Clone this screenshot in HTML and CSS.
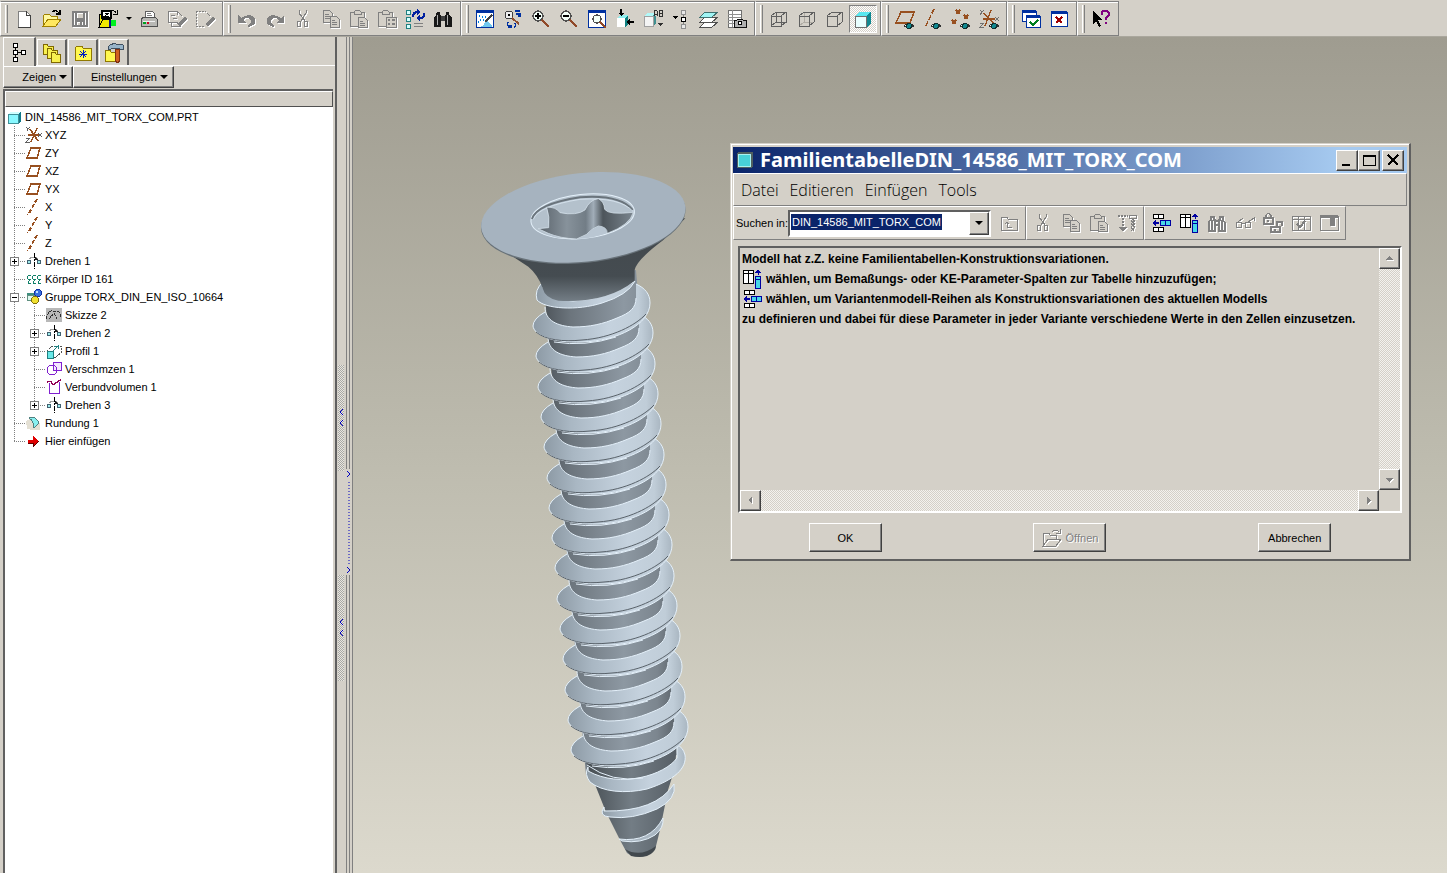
FILE: index.html
```
<!DOCTYPE html>
<html lang="de">
<head>
	<meta charset="utf-8">
	<title>DIN_14586_MIT_TORX_COM.PRT</title>
	<link rel="stylesheet" href="styles.css">
</head>
<body>
<!-- Shared icons -->
<svg class="defs" aria-hidden="true">
	<defs>
		<symbol id="new" viewBox="0 0 20 20"><path d="M4 2h8l4 4v12H4z" fill="#fff" stroke="#808080"/><path d="M12 2v4h4M16 6v12H4" fill="none" stroke="#404040"/></symbol>
		<symbol id="open" viewBox="0 0 20 20"><path d="M1 17V7l2-2h4l2 2h6v3" fill="#fff8a0" stroke="#a08000"/><path d="M1 17l5-7h13l-5 7z" fill="#ffe860" stroke="#a08000"/><path d="M10 3q4-3 7 1M18 1v4h-4" fill="none" stroke="#000" stroke-width="1.3"/></symbol>
		<symbol id="openoff" viewBox="0 0 20 20"><path d="M1 18V6l2-1h4l1 2h6v4M1 18l5-7h13l-5 7zM10 4q4-4 7 0M18 1v4h-4" fill="none" stroke="#808080"/></symbol>
		<symbol id="save" viewBox="0 0 20 20"><path d="M3 3h14v14H3zM6 3v7h8V3M6 17v-5h8v5M11 13v3" fill="none" stroke="#808080" stroke-width="1.3"/></symbol>
		<symbol id="zfolder" viewBox="0 0 20 20"><path d="M1 18V5h3v13z" fill="#f0e800" stroke="#000"/><path d="M1 18l4-8h7v8z" fill="#f0e800" stroke="#000"/><path d="M4 2h9v7H4z" fill="#fff" stroke="#000" stroke-width="1.4"/><path d="M7 4h4L7 7h4" fill="none" stroke="#000"/><path d="M11 11h2v7h-2z" fill="#101080"/><path d="M13 11h5v6h-5z" fill="#00f020"/><path d="M13 3q3-3 5 1M19 1v4h-4" fill="none" stroke="#000"/></symbol>
		<symbol id="print" viewBox="0 0 20 20"><path d="M6 9l1-7h6l2 2v5" fill="#fff" stroke="#606060"/><path d="M8 4h4M8 6h5" stroke="#808080"/><path d="M2 10l3-2h11l2 2v7H2z" fill="#b8b8b4" stroke="#505050"/><path d="M4 12h12" stroke="#f0f0f0"/><path d="M4 14h3" stroke="#00a020" stroke-width="2"/><path d="M8 14h2" stroke="#d00020" stroke-width="2"/></symbol>
		<symbol id="sheetpen" viewBox="0 0 20 20"><path d="M1 2h9l5 5M1 2v11h3M4 6h4M6 9h4M10 2v4M4 17h9l-3-4H4z" fill="none" stroke="#808080"/><path d="M18 7l2 3-7 8-3-3z" fill="#808080"/></symbol>
		<symbol id="dashpen" viewBox="0 0 20 20"><path d="M1 2h9l5 5M1 2v15h9" fill="none" stroke="#808080" stroke-dasharray="2 1"/><path d="M18 7l2 3-7 8-3-3z" fill="#808080"/></symbol>
		<symbol id="undo" viewBox="0 0 20 20"><path d="M1 6v8h8L6 11q5-4 8 0 1 3-3 5v2q9-2 7-8-4-7-14-1z" fill="#808080"/></symbol>
		<symbol id="redo" viewBox="0 0 20 20"><path d="M19 6v8h-8l3-3q-5-4-8 0-1 3 3 5v2q-9-2-7-8 4-7 14-1z" fill="#808080"/></symbol>
		<symbol id="cut" viewBox="0 0 20 20"><g fill="none" stroke="#808080"><path d="M6 1v3l6 8M13 1v3L8 12"/><ellipse cx="6" cy="15" rx="2" ry="3"/><ellipse cx="13" cy="15" rx="2" ry="3"/></g></symbol>
		<symbol id="copy" viewBox="0 0 20 20"><g fill="#d4d0c8" stroke="#808080"><path d="M2 1h6l3 3v9H2z"/><path d="M4 5h4M4 7h5M4 9h5"/><path d="M9 7h6l3 3v8H9z"/><path d="M11 11h3M11 13h5M11 15h5"/></g></symbol>
		<symbol id="paste" viewBox="0 0 20 20"><g fill="#d4d0c8" stroke="#808080"><path d="M1 3h14v14H1z"/><path d="M5 5V3l2-2h3l2 2v2z"/><path d="M9 8h6l3 3v7H9z"/><path d="M11 12h3M11 14h5M11 16h5"/></g></symbol>
		<symbol id="pastespecial" viewBox="0 0 20 20"><g fill="#d4d0c8" stroke="#808080"><path d="M1 3h14v14H1z"/><path d="M5 5V3l2-2h3l2 2v2z"/><path d="M9 8h10v10H9z"/><path d="M11 11h2M15 11h3M11 15h2M15 15h3" stroke-width="2"/></g></symbol>
		<symbol id="regen" viewBox="0 0 20 20"><path d="M1 1h4v4H1zM1 8h4v4H1zM1 15h4v4H1z" fill="#d8ffff" stroke="#208080"/><path d="M9 14h9M9 17h9" stroke="#808080"/><path d="M8 8q0-5 5-5M19 4q1 5-4 5" fill="none" stroke="#0020a0" stroke-width="2"/><path d="M12 0l4 3-4 3zM15 6v6l-4-3z" fill="#0020a0"/></symbol>
		<symbol id="binoc" viewBox="0 0 20 20"><path d="M4 3h3v3h1v12H1V9l2-3zM13 3h3v3l3 3v9h-7V6h1z" fill="#181818"/><path d="M8 7h4v5H8z" fill="#404040"/><path d="M4 6v10M14 6v10" stroke="#b0b0b0"/></symbol>
		<symbol id="binocoff" viewBox="0 0 20 20"><path d="M4 4h3v3h1v11H2V9l2-3zM13 4h3v3l2 3v8h-6V7h1zM8 8h4v4H8zM5 7v10M15 7v10" fill="none" stroke="#808080" stroke-width="1.5"/></symbol>
		<symbol id="repaint" viewBox="0 0 20 20"><path d="M1 1h17v17H1z" fill="#fff" stroke="#0030a0"/><path d="M1 1h17v3H1z" fill="#0030a0"/><path d="M5 18q5-2 6-7l6 5v2z" fill="#70c8f0"/><path d="M17 6l-7 7" stroke="#404040" stroke-width="1.5"/><path d="M4 7h1M7 8h1M5 11h1M8 11h1M3 13h1M10 8h1" stroke="#0080e0" stroke-width="2"/></symbol>
		<symbol id="spin" viewBox="0 0 20 20"><circle cx="6" cy="6" r="4" fill="#eee" stroke="#404040"/><path d="M5 6h2" stroke="#000" stroke-width="2"/><path d="M9 9l7 6" stroke="#905030" stroke-width="2"/><path d="M12 2h5M13 5h5M18 7h-3M5 13q-2 4 2 5M11 18q3-1 1-4" fill="none" stroke="#0030a0" stroke-width="1.5"/><path d="M5 16h4v3H5z" fill="#0030a0"/></symbol>
		<symbol id="zoomin" viewBox="0 0 20 20"><circle cx="7" cy="7" r="5" fill="#f4fff8" stroke="#505050" stroke-width="1.3"/><path d="M4 7h6M7 4v6" stroke="#000" stroke-width="1.6"/><path d="M11 11l7 7" stroke="#904828" stroke-width="2.5"/></symbol>
		<symbol id="zoomout" viewBox="0 0 20 20"><circle cx="7" cy="7" r="5" fill="#f4fff8" stroke="#505050" stroke-width="1.3"/><path d="M4 7h6" stroke="#000" stroke-width="1.6"/><path d="M11 11l7 7" stroke="#904828" stroke-width="2.5"/></symbol>
		<symbol id="refit" viewBox="0 0 20 20"><path d="M1 1h17v17H1z" fill="#fff" stroke="#0030a0"/><path d="M1 1h17v3H1z" fill="#0030a0"/><circle cx="10" cy="10" r="4" fill="#f4fff8" stroke="#505050" stroke-width="1.3"/><path d="M13 13l6 6" stroke="#904828" stroke-width="2"/></symbol>
		<symbol id="orient" viewBox="0 0 20 20"><path d="M2 9l3-3h8v9l-3 3H2z" fill="#108080"/><path d="M2 9h8v9H2z" fill="#fff"/><path d="M2 9l3-3h8l-3 3z" fill="#90f0f0"/><path d="M6 0v6M12 13h7" stroke="#000" stroke-width="1.4"/><path d="M3 4h6L6 7zM15 10v6l-4-3z" fill="#000"/></symbol>
		<symbol id="views" viewBox="0 0 20 20"><path d="M1 7l3-3h9v10l-3 3H1z" fill="#409090"/><path d="M1 7h9v10H1z" fill="#f4f4f4" stroke="#a0a0a0"/><path d="M1 7l3-3h8l-2 3z" fill="#b0f8f8"/><path d="M11 7V2l1-1 2 1v5M11 5h3M16 1h3v6h-3zM16 4h3" fill="#d4d0c8" stroke="#303030"/><path d="M15 14h5l-3 3z" fill="#303030"/></symbol>
		<symbol id="layerctl" viewBox="0 0 20 20"><path d="M12 2v16" stroke="#808080"/><path d="M10 1h4v4h-4zM10 15h4v4h-4z" fill="#e8e8e8" stroke="#909090"/><path d="M10 8h4v4h-4z" fill="#fff" stroke="#000"/><path d="M1 7h6L4 10z" fill="#000"/></symbol>
		<symbol id="layers" viewBox="0 0 20 20"><path d="M1 18l5-5h13l-6 5z" fill="#fff" stroke="#505050"/><path d="M1 13l5-5h13l-6 5z" fill="#fff" stroke="#505050"/><path d="M1 8l5-5h13l-6 5z" fill="#a0f4f4" stroke="#407070"/></symbol>
		<symbol id="viewmgr" viewBox="0 0 20 20"><path d="M1 1h13v17H1z" fill="#fff" stroke="#707070"/><path d="M1 5h13M1 8h13M1 11h13M1 14h8M5 1v17" stroke="#909090"/><path d="M7 11h3l1-1h4l1 1h3v7H7z" fill="#b0b0b0" stroke="#101010"/><circle cx="13" cy="14" r="2" fill="#fff" stroke="#000"/></symbol>
		<symbol id="wire" viewBox="0 0 20 20"><path d="M2 7h10v10H2zM7 3h10v10H7zM2 7l5-4M12 7l5-4M2 17l5-4M12 17l5-4" fill="none" stroke="#606060"/></symbol>
		<symbol id="hidden" viewBox="0 0 20 20"><path d="M7 3v10h10M2 17l5-4" fill="none" stroke="#b0aca4"/><path d="M2 7h10v10H2zM2 7l5-4h10v10l-5 4M12 7l5-4" fill="none" stroke="#606060"/></symbol>
		<symbol id="nohidden" viewBox="0 0 20 20"><path d="M2 7h10v10H2zM2 7l5-4h10v10l-5 4M12 7l5-4" fill="none" stroke="#606060"/></symbol>
		<symbol id="shade" viewBox="0 0 20 20"><path d="M2 7l4-4h12v11l-4 4H2z" fill="#108890"/><path d="M2 7h11v11H2z" fill="#e8ffff" stroke="#707070"/><path d="M2 7l4-4h12l-5 4z" fill="#58e8f0"/></symbol>
		<symbol id="eye" viewBox="0 0 20 20"><path d="M7 16q4-5 10 0-5 4-10 0z" fill="#fff" stroke="#303030"/><circle cx="12" cy="16" r="2.5" fill="#108890" stroke="#103030"/></symbol>
		<symbol id="dplane" viewBox="0 0 20 20"><path d="M1 14L6 3h13l-4 11z" fill="none" stroke="#985020" stroke-width="1.5"/><use href="#eye" width="20" height="20" x="2" y="1"/></symbol>
		<symbol id="daxis" viewBox="0 0 20 20"><path d="M11 0L2 19" stroke="#985020" stroke-width="1.5" stroke-dasharray="5 2"/><use href="#eye" width="20" height="20" x="1" y="1"/></symbol>
		<symbol id="dpoint" viewBox="0 0 20 20"><path d="M5 1l4 4M9 1L5 5M13 6l4 4M17 6l-4 4M1 11l4 4M5 11l-4 4" stroke="#985020" stroke-width="1.5"/><use href="#eye" width="20" height="20" x="2" y="1"/></symbol>
		<symbol id="dcsys" viewBox="0 0 20 20"><path d="M4 10h12M12 1L6 17M5 4l10 11" stroke="#985020" stroke-width="1.5"/><path d="M1 1l2 2 2-2M3 3L1 6M16 8l4 4M20 8l-4 4M1 14h4l-4 4h4" fill="none" stroke="#707070"/><use href="#eye" width="20" height="20" x="3" y="1"/></symbol>
		<symbol id="wincheck" viewBox="0 0 20 20"><path d="M1 2h14v10H1z" fill="#fff" stroke="#0030a0"/><path d="M1 1h14v3H1z" fill="#0030a0"/><path d="M5 7h14v11H5z" fill="#fff" stroke="#0030a0"/><path d="M5 6h14v3H5z" fill="#0030a0"/><path d="M9 13l3 3 5-5" fill="none" stroke="#008020" stroke-width="2"/></symbol>
		<symbol id="winclose" viewBox="0 0 20 20"><path d="M2 3h16v14H2z" fill="#fff" stroke="#0030a0"/><path d="M2 2h16v3H2z" fill="#0030a0"/><path d="M7 8l6 6M13 8l-6 6" stroke="#a00000" stroke-width="2"/></symbol>
		<symbol id="help" viewBox="0 0 20 20"><path d="M2 2v13l3-3 3 6 2-1-3-6h4z" fill="#000"/><path d="M11 6V4q0-2 3-2 4 0 4 3 0 2-3 4v2M15 13v2" fill="none" stroke="#800080" stroke-width="2.3"/></symbol>
		<symbol id="tree" viewBox="0 0 20 20"><path d="M6 5v10M8 10h4" stroke="#000"/><path d="M4 1h4v4H4zM4 8h4v4H4zM4 15h4v4H4zM12 8h4v4h-4z" fill="#fff" stroke="#000"/></symbol>
		<symbol id="folders" viewBox="0 0 20 20"><g fill="#f8f050" stroke="#806800"><path d="M1 3l1-2h3l1 2h5v8H1z"/><path d="M5 7l1-2h3l1 2h5v8H5z"/><path d="M9 11l1-2h3l1 2h4v8H9z"/></g></symbol>
		<symbol id="fav" viewBox="0 0 20 20"><path d="M2 17V5l2-2h5l1 2h8v12z" fill="#fff850" stroke="#907800"/><path d="M10 7v8M6 11h8M7 8l6 6M13 8l-6 6" stroke="#0020c0"/></symbol>
		<symbol id="hammer" viewBox="0 0 20 20"><path d="M1 18V9l1-2h4l1 2h6v9z" fill="#fff850" stroke="#907800"/><path d="M11 6h4l1 11-2 3-3-2z" fill="#d06020" stroke="#803010"/><path d="M4 4q3-4 8-3h4l3 1v4h-3l-1-1H9L5 7z" fill="#98b4c8" stroke="#405060"/></symbol>
		<symbol id="part" viewBox="0 0 18 18"><path d="M3 6l3-2h10v9l-2 2H3z" fill="#107888"/><path d="M3 6h10v9H3z" fill="#88f8ff" stroke="#409098"/><path d="M3 6l3-2h10l-3 2z" fill="#d0ffff"/></symbol>
		<symbol id="csys" viewBox="0 0 18 18"><path d="M3 9h12M12 2L6 16M5 3l8 12" stroke="#985020" stroke-width="1.5"/><path d="M1 1l2 2 2-2M3 3L2 5M13 7l4 4M17 7l-4 4M1 12h4l-4 4h4" fill="none" stroke="#606060"/></symbol>
		<symbol id="plane" viewBox="0 0 18 18"><path d="M2 14L6 4h9l-3 10z" fill="none" stroke="#985020" stroke-width="1.5"/></symbol>
		<symbol id="axis" viewBox="0 0 18 18"><path d="M12 1L3 17" stroke="#985020" stroke-width="2" stroke-dasharray="4 2"/></symbol>
		<symbol id="revolve" viewBox="0 0 18 18"><path d="M4 7q4-4 9 0" fill="none" stroke="#a0a0a0"/><circle cx="4" cy="10" r="2" fill="#a0ecec" stroke="#406070"/><circle cx="14" cy="10" r="2" fill="#a0ecec" stroke="#406070"/><path d="M9 1v16" stroke="#000" stroke-dasharray="5 1 2 1"/><path d="M10 5l3 3h-3z" fill="#202020"/></symbol>
		<symbol id="body" viewBox="0 0 18 18"><g fill="none" stroke="#108068"><path d="M6 6q-5-1-3 3 3 0 2 1-4 4 1 3"/><path d="M11 6q-5-1-3 3 3 0 2 1-4 4 1 3"/><path d="M16 6q-5-1-3 3 3 0 2 1-4 4 1 3"/></g></symbol>
		<symbol id="group" viewBox="0 0 18 18"><path d="M2 5h9v7H2z" fill="#409080"/><path d="M2 7h7v5H2z" fill="#e0f8f0" stroke="#609080"/><circle cx="13" cy="5" r="3.5" fill="#3870e0" stroke="#1030a0"/><circle cx="10" cy="12" r="3.5" fill="#f0e030" stroke="#807010"/><circle cx="12" cy="4" r="1" fill="#c0e0ff"/></symbol>
		<symbol id="sketch" viewBox="0 0 18 18"><path d="M1 2h16v14H1z" fill="#b8b8b8"/><path d="M1 13q3-9 6-8t5 0q3 0 4 7M4 13l5-6 3 6" fill="none" stroke="#303030" stroke-dasharray="3 1"/></symbol>
		<symbol id="extrude" viewBox="0 0 18 18"><path d="M2 9l5-5h9v7l-7 5" fill="none" stroke="#505050" stroke-dasharray="2 1"/><path d="M2 9h6v7H2z" fill="#68e8e8" stroke="#208080"/><path d="M8 9l5-5M13 3v4M9 4h4" stroke="#208080"/></symbol>
		<symbol id="merge" viewBox="0 0 18 18"><path d="M8 2h8v8H8z" fill="#f4e8ff" stroke="#8020d0"/><circle cx="7" cy="10" r="5" fill="none" stroke="#8020d0"/></symbol>
		<symbol id="volume" viewBox="0 0 18 18"><path d="M4 5v10h10V4" fill="none" stroke="#8020d0"/><path d="M2 4q4-2 5 1t4 0 5-3" fill="none" stroke="#900050" stroke-width="1.4"/></symbol>
		<symbol id="round" viewBox="0 0 18 18"><path d="M1 7l6-3 8 5v7H8L2 15z" fill="#e4e0d4"/><path d="M4 4q6-3 10 5l-5 5q0-7-5-10z" fill="#88f0f0" stroke="#508080"/></symbol>
		<symbol id="insert" viewBox="0 0 18 18"><path d="M3 8h5V4l6 5-6 6v-4H3z" fill="#e00000"/><path d="M3 11h5v4l6-6" fill="none" stroke="#600000"/></symbol>
		<symbol id="addrow" viewBox="0 0 20 20"><path d="M2 1h5v4H2zM7 1h5v4H7zM2 14h5v4H2zM7 14h5v4H7z" fill="#fff" stroke="#000"/><path d="M9 7h5v5H9zM14 7h5v5h-5z" fill="#48d8e8" stroke="#0000a0"/><path d="M3 10h5" stroke="#0000a0" stroke-width="2"/><path d="M5 6v7L1 10z" fill="#0000a0"/></symbol>
		<symbol id="addcol" viewBox="0 0 20 20"><path d="M1 1h5v13H1zM6 1h5v13H6zM1 4h10" fill="#fff" stroke="#000"/><path d="M13 7h5v12h-5zM13 10h5" fill="#48d8e8" stroke="#0000a0"/><path d="M16 1v5" stroke="#0000a0"/><path d="M12 4h7l-3-4z" fill="#0000a0"/></symbol>
		<symbol id="upfolder" viewBox="0 0 20 20"><path d="M2 17V5l1-1h5l1 2h9v11zM8 14h5M8 14V9M6 11l2-2 2 2" fill="none" stroke="#808080"/></symbol>
		<symbol id="sort" viewBox="0 0 20 20"><path d="M1 3h10M6 5v11" fill="none" stroke="#808080" stroke-width="2" stroke-dasharray="2 1"/><path d="M2 14h8l-4 5z" fill="#808080"/><path d="M12 2h7v3h-7zM14 5l4 3-4 3 4 3-4 4M18 5l-4 3 4 3-4 3 3 4" fill="none" stroke="#808080"/></symbol>
		<symbol id="glasses" viewBox="0 0 20 20"><g fill="none" stroke="#808080"><circle cx="4" cy="12" r="3"/><circle cx="13" cy="12" r="3"/><path d="M7 11q2-2 3 0M3 9l5-4M13 9l6-4v3"/></g></symbol>
		<symbol id="locks" viewBox="0 0 20 20"><g fill="none" stroke="#808080" stroke-width="1.3"><path d="M1 5h9v6H1zM3 5V2l2-2 3 2v3M5 7v2M8 14h9v5H8zM14 14V9h5v4M12 16v2"/></g></symbol>
		<symbol id="verify" viewBox="0 0 20 20"><path d="M1 3h18v14H1zM1 6h18M7 3v14M13 3v14" fill="none" stroke="#808080"/><path d="M6 11l3 3 5-6" fill="none" stroke="#808080" stroke-width="2"/></symbol>
		<symbol id="preview" viewBox="0 0 20 20"><path d="M1 3h18v14H1z" fill="none" stroke="#808080"/><path d="M1 2h18v3H1zM11 4h5v9h-5z" fill="#808080"/></symbol>
	</defs>
</svg>

<div class="toolbar">
	<div class="group">
		<span class="grip"></span>
		<button aria-label="Neu"><svg><use href="#new"/></svg></button>
		<button aria-label="Öffnen"><svg><use href="#open"/></svg></button>
		<button aria-label="Speichern" disabled><svg><use href="#save"/></svg></button>
		<button aria-label="Ordner"><svg><use href="#zfolder"/></svg></button>
		<button class="more" aria-label="Mehr"><span class="down"></span></button>
		<button aria-label="Drucken"><svg><use href="#print"/></svg></button>
		<button aria-label="Blatt" disabled><svg><use href="#sheetpen"/></svg></button>
		<button aria-label="Auswahl" disabled><svg><use href="#dashpen"/></svg></button>
	</div>
	<div class="group">
		<span class="grip"></span>
		<button aria-label="Rückgängig" disabled><svg><use href="#undo"/></svg></button>
		<button aria-label="Wiederholen" disabled><svg><use href="#redo"/></svg></button>
		<button aria-label="Ausschneiden" disabled><svg><use href="#cut"/></svg></button>
		<button aria-label="Kopieren" disabled><svg><use href="#copy"/></svg></button>
		<button aria-label="Einfügen" disabled><svg><use href="#paste"/></svg></button>
		<button aria-label="Inhalte einfügen" disabled><svg><use href="#pastespecial"/></svg></button>
		<button aria-label="Regenerieren"><svg><use href="#regen"/></svg></button>
		<button aria-label="Suchen"><svg><use href="#binoc"/></svg></button>
	</div>
	<div class="group">
		<span class="grip"></span>
		<button aria-label="Bildaufbau"><svg><use href="#repaint"/></svg></button>
		<button aria-label="Drehzentrum"><svg><use href="#spin"/></svg></button>
		<button aria-label="Vergrößern"><svg><use href="#zoomin"/></svg></button>
		<button aria-label="Verkleinern"><svg><use href="#zoomout"/></svg></button>
		<button aria-label="Einpassen"><svg><use href="#refit"/></svg></button>
		<button aria-label="Orientieren"><svg><use href="#orient"/></svg></button>
		<button aria-label="Ansichten"><svg><use href="#views"/></svg></button>
		<button aria-label="Struktur"><svg><use href="#layerctl"/></svg></button>
		<button aria-label="Folien"><svg><use href="#layers"/></svg></button>
		<button aria-label="Ansichtsmanager"><svg><use href="#viewmgr"/></svg></button>
	</div>
	<div class="group">
		<span class="grip"></span>
		<button aria-label="Drahtmodell"><svg><use href="#wire"/></svg></button>
		<button aria-label="Verdeckte Kanten"><svg><use href="#hidden"/></svg></button>
		<button aria-label="Sichtbare Kanten"><svg><use href="#nohidden"/></svg></button>
		<button class="pressed" aria-label="Schattiert"><svg><use href="#shade"/></svg></button>
	</div>
	<div class="group">
		<span class="grip"></span>
		<button aria-label="Ebenen"><svg><use href="#dplane"/></svg></button>
		<button aria-label="Achsen"><svg><use href="#daxis"/></svg></button>
		<button aria-label="Punkte"><svg><use href="#dpoint"/></svg></button>
		<button aria-label="Koordinatensysteme"><svg><use href="#dcsys"/></svg></button>
	</div>
	<div class="group">
		<span class="grip"></span>
		<button aria-label="Fenster aktivieren"><svg><use href="#wincheck"/></svg></button>
		<button aria-label="Fenster schließen"><svg><use href="#winclose"/></svg></button>
	</div>
	<div class="group">
		<span class="grip"></span>
		<button aria-label="Hilfe"><svg><use href="#help"/></svg></button>
	</div>
</div>

<div class="main">
	<div class="sidebar">
		<div class="tabs">
			<button class="active" aria-label="Modellbaum"><svg><use href="#tree"/></svg></button>
			<button aria-label="Ordner"><svg><use href="#folders"/></svg></button>
			<button aria-label="Favoriten"><svg><use href="#fav"/></svg></button>
			<button aria-label="Werkzeuge"><svg><use href="#hammer"/></svg></button>
		</div>
		<div class="menus">
			<button class="zeigen">Zeigen <span class="down"></span></button>
			<button class="einst">Einstellungen <span class="down"></span></button>
		</div>
		<div class="treebox">
			<div class="treehead"></div>
			<ul class="tree">
				<li><svg><use href="#part"/></svg>DIN_14586_MIT_TORX_COM.PRT</li>
				<li><i class="branch"></i><svg><use href="#csys"/></svg>XYZ</li>
				<li><i class="branch"></i><svg><use href="#plane"/></svg>ZY</li>
				<li><i class="branch"></i><svg><use href="#plane"/></svg>XZ</li>
				<li><i class="branch"></i><svg><use href="#plane"/></svg>YX</li>
				<li><i class="branch"></i><svg><use href="#axis"/></svg>X</li>
				<li><i class="branch"></i><svg><use href="#axis"/></svg>Y</li>
				<li><i class="branch"></i><svg><use href="#axis"/></svg>Z</li>
				<li><i class="branch"><button class="plus" aria-label="Aufklappen"></button></i><svg><use href="#revolve"/></svg>Drehen 1</li>
				<li><i class="branch"></i><svg><use href="#body"/></svg>Körper ID 161</li>
				<li><i class="branch"><button class="minus" aria-label="Zuklappen"></button></i><svg><use href="#group"/></svg>Gruppe TORX_DIN_EN_ISO_10664</li>
				<li><i class="line"></i><i class="branch"></i><svg><use href="#sketch"/></svg>Skizze 2</li>
				<li><i class="line"></i><i class="branch"><button class="plus" aria-label="Aufklappen"></button></i><svg><use href="#revolve"/></svg>Drehen 2</li>
				<li><i class="line"></i><i class="branch"><button class="plus" aria-label="Aufklappen"></button></i><svg><use href="#extrude"/></svg>Profil 1</li>
				<li><i class="line"></i><i class="branch"></i><svg><use href="#merge"/></svg>Verschmzen 1</li>
				<li><i class="line"></i><i class="branch"></i><svg><use href="#volume"/></svg>Verbundvolumen 1</li>
				<li><i class="line"></i><i class="branch end"><button class="plus" aria-label="Aufklappen"></button></i><svg><use href="#revolve"/></svg>Drehen 3</li>
				<li><i class="branch"></i><svg><use href="#round"/></svg>Rundung 1</li>
				<li><i class="branch end"></i><svg><use href="#insert"/></svg>Hier einfügen</li>
			</ul>
		</div>
	</div>

	<div class="splitter">
		<div class="handles">
			<svg class="handle" viewBox="0 0 6 106"><path d="M5 44L2 47l3 3M5 55l-3 3 3 3"/></svg>
			<svg class="handle" viewBox="0 0 6 106"><path d="M5 44L2 47l3 3M5 55l-3 3 3 3"/></svg>
		</div>
		<div class="rails">
			<div class="rail"></div>
			<svg class="pull" viewBox="0 0 7 106"><path d="M1 2l3 3-3 3M1 98l3 3-3 3"/><path d="M3 13v82" stroke-dasharray="1 2"/></svg>
			<div class="rail rest"></div>
		</div>
	</div>

	<div class="viewport">
		<svg class="screw" viewBox="470 160 230 710" role="img" aria-label="Schraube">
			<defs>
				<linearGradient id="shaft"><stop offset="0" stop-color="#4e555b"/><stop offset=".2" stop-color="#6c757d"/><stop offset=".6" stop-color="#8d98a2"/><stop offset=".85" stop-color="#7c868f"/><stop offset="1" stop-color="#596168"/></linearGradient>
				<linearGradient id="flank"><stop offset="0" stop-color="#8d9aa5"/><stop offset=".25" stop-color="#a9b7c3"/><stop offset=".65" stop-color="#c5d2de"/><stop offset=".9" stop-color="#c0cdd8"/><stop offset="1" stop-color="#a9b6c1"/></linearGradient>
				<linearGradient id="cone" x2="0" y2="1"><stop offset="0" stop-color="#42484c"/><stop offset=".7" stop-color="#454c51"/><stop offset="1" stop-color="#737d85"/></linearGradient>
				<linearGradient id="wall"><stop offset="0" stop-color="#59626a"/><stop offset=".3" stop-color="#87929b"/><stop offset=".5" stop-color="#727d86"/><stop offset=".58" stop-color="#a1adb8"/><stop offset=".68" stop-color="#4d555b"/><stop offset="1" stop-color="#7a858e"/></linearGradient>
				<linearGradient id="tip"><stop offset="0" stop-color="#454c51"/><stop offset=".5" stop-color="#737d85"/><stop offset="1" stop-color="#565e65"/></linearGradient>
				<!-- one turn of the thread -->
				<g id="turn">
					<path d="M545 312Q533 319 533 326C534 335 552 343 582 342C618 341 650 324 650 303C650 294 645 288 636 284L636 298C636 308 630 313 617 318C603 324 590 327 573 327C558 326 548 321 545 312Z" fill="url(#flank)"/>
					<path d="M545 307C545 321 558 326 573 327C590 327 603 324 617 318C630 313 636 308 636 298" fill="none" stroke="#e4f0fa"/>
					<path d="M545 312Q533 319 533 326C534 335 552 343 582 342C618 341 650 324 650 303C650 294 645 288 636 284" fill="none" stroke="#e4f0fa"/>
					<path d="M536 332C545 340 563 342 582 340C612 338 636 325 646 314" fill="none" stroke="#59626a"/>
					<path d="M554 342Q585 347 616 337" fill="none" stroke="#e4f0fa"/>
				</g>
			</defs>
			<path d="M544 285L636 270L677 755L586 775Z" fill="url(#shaft)"/>
			<path d="M586 762L677 742L675 768L668 790L660 830L655 850Q640 862 627 853L620 840L606 812Z" fill="url(#tip)"/>
			<path d="M619 839Q650 843 663 818Q664 828 655 835Q641 844 622 841Z" fill="#aab7c2" stroke="#e4f0fa"/>
			<path d="M625 849Q640 858 656 846Q655 853 647 856Q640 858 631 856Z" fill="#41484d"/>
			<path d="M604 807Q598 816 610 817Q632 820 657 809Q677 799 674 784Q656 812 604 811Z" fill="url(#flank)" stroke="#e4f0fa"/>
			<path d="M588 767Q584 774 590 782C602 792 625 794 647 789C675 780 687 768 685 755Q683 747 677 745L677 758C665 775 620 789 588 771Z" fill="url(#flank)" stroke="#e4f0fa"/>
			<path d="M587 765Q612 783 643 778" fill="none" stroke="#e4f0fa"/>
			<!-- bottom turn first, each turn lies over the one below -->
			<use href="#turn" x="38" y="424"/>
			<use href="#turn" x="35" y="394"/>
			<use href="#turn" x="32" y="364"/>
			<use href="#turn" x="30" y="333"/>
			<use href="#turn" x="27" y="303"/>
			<use href="#turn" x="24" y="273"/>
			<use href="#turn" x="22" y="242"/>
			<use href="#turn" x="19" y="212"/>
			<use href="#turn" x="16" y="182"/>
			<use href="#turn" x="14" y="152"/>
			<use href="#turn" x="11" y="121"/>
			<use href="#turn" x="8" y="91"/>
			<use href="#turn" x="5" y="61"/>
			<use href="#turn" x="3" y="30"/>
			<use href="#turn"/>
			<path d="M543 282Q534 290 537 300C545 309 577 311 602 303Q628 295 635 281Q610 299 573 301Q551 300 543 288Z" fill="url(#flank)" stroke="#e4f0fa"/>
			<!-- head, drawn at three times the size -->
			<g transform="translate(470 160) scale(.3333)">
				<path d="M34 215L60 245L175 320Q205 345 218 385Q225 415 265 422Q410 430 494 362V330Q500 300 580 240L646 175Z" fill="url(#cone)"/>
				<ellipse cx="340" cy="176" rx="308" ry="133" transform="rotate(-6 340 176)" fill="#687279"/>
				<ellipse cx="340" cy="172" rx="308" ry="133" transform="rotate(-6 340 172)" fill="#a6b3bf"/>
				<ellipse cx="338" cy="169" rx="156" ry="66" transform="rotate(-6 338 169)" fill="#b4c1cc" stroke="#e4f0fa" stroke-width="3"/>
				<path d="M186 177Q200 132 330 112Q450 103 488 150" fill="none" stroke="#6a747c" stroke-width="6"/>
				<path d="M190 178Q205 138 330 118Q450 110 490 155" fill="none" stroke="#e4f0fa" stroke-width="2"/>
				<path d="M230 142Q258 140 270 158Q320 168 345 150Q360 118 385 116Q402 124 404 148Q416 166 490 157Q480 195 412 220Q412 200 385 198Q365 206 350 223L320 237Q270 235 235 220L205 206L236 203Q240 170 230 142Z" fill="url(#wall)" stroke="#dce8f2" stroke-width="2"/>
				<path d="M410 219Q410 200 385 199Q365 207 350 225L320 237Q370 236 410 219Z" fill="#b9c6d2"/>
				<path d="M232 222Q255 224 270 235Q250 232 232 222Z" fill="#b9c6d2"/>
			</g>
		</svg>

		<div class="dialog" role="dialog" aria-labelledby="dlgtitle">
			<div class="titlebar">
				<svg viewBox="0 0 18 18"><path d="M1 2l2-1h14v14l-2 2H1z" fill="#506060"/><path d="M2 3h12v12H2z" fill="#48d0d8" stroke="#a8f0f0"/></svg>
				<h1 id="dlgtitle">FamilientabelleDIN_14586_MIT_TORX_COM</h1>
				<button aria-label="Minimieren"><svg viewBox="0 0 16 16"><path d="M3 13h8" stroke="#000" stroke-width="2"/></svg></button>
				<button aria-label="Maximieren"><svg viewBox="0 0 16 16"><path d="M2 3h12v10H2zM2 4h12" fill="none" stroke="#000"/></svg></button>
				<button class="close" aria-label="Schließen"><svg viewBox="0 0 16 16"><path d="M3 3l10 10M13 3L3 13" stroke="#000" stroke-width="2"/></svg></button>
			</div>
			<div class="menubar">
				<button>Datei</button>
				<button>Editieren</button>
				<button>Einfügen</button>
				<button>Tools</button>
			</div>
			<div class="dlgtools">
				<div class="set search">
					<label for="model">Suchen in:</label>
					<div class="combo">
						<select id="model"><option>DIN_14586_MIT_TORX_COM</option></select>
						<span class="arrow"><span class="down"></span></span>
					</div>
					<button aria-label="Ebene höher" disabled><svg><use href="#upfolder"/></svg></button>
				</div>
				<div class="set">
					<button aria-label="Ausschneiden" disabled><svg><use href="#cut"/></svg></button>
					<button aria-label="Kopieren" disabled><svg><use href="#copy"/></svg></button>
					<button aria-label="Einfügen" disabled><svg><use href="#paste"/></svg></button>
					<button aria-label="Muster" disabled><svg><use href="#sort"/></svg></button>
				</div>
				<div class="set">
					<button aria-label="Variante hinzufügen"><svg><use href="#addrow"/></svg></button>
					<button aria-label="Spalte hinzufügen"><svg><use href="#addcol"/></svg></button>
					<button aria-label="Suchen" disabled><svg><use href="#binocoff"/></svg></button>
					<button aria-label="Anzeigen" disabled><svg><use href="#glasses"/></svg></button>
					<button aria-label="Sperren" disabled><svg><use href="#locks"/></svg></button>
					<button aria-label="Prüfen" disabled><svg><use href="#verify"/></svg></button>
					<button aria-label="Vorschau" disabled><svg><use href="#preview"/></svg></button>
				</div>
			</div>
			<div class="content">
				<div class="message">
					<p>Modell hat z.Z. keine Familientabellen-Konstruktionsvariationen.</p>
					<p><svg><use href="#addcol"/></svg>wählen, um Bemaßungs- oder KE-Parameter-Spalten zur Tabelle hinzuzufügen;</p>
					<p><svg><use href="#addrow"/></svg>wählen, um Variantenmodell-Reihen als Konstruktionsvariationen des aktuellen Modells</p>
					<p>zu definieren und dabei für diese Parameter in jeder Variante verschiedene Werte in den Zellen einzusetzen.</p>
				</div>
				<div class="scroll vert">
					<button aria-label="Nach oben"><svg viewBox="0 0 9 9"><path d="M1 6l3-4 4 4z"/></svg></button>
					<button aria-label="Nach unten"><svg viewBox="0 0 9 9"><path d="M1 3h7L4 7z"/></svg></button>
				</div>
				<div class="scroll">
					<button aria-label="Nach links"><svg viewBox="0 0 9 9"><path d="M6 1v7L2 4z"/></svg></button>
					<button aria-label="Nach rechts"><svg viewBox="0 0 9 9"><path d="M3 1v7l4-4z"/></svg></button>
				</div>
			</div>
			<div class="buttons">
				<button>OK</button>
				<button disabled><svg><use href="#openoff"/></svg>Öffnen</button>
				<button>Abbrechen</button>
			</div>
		</div>
	</div>
</div>
</body>
</html>
```
FILE: styles.css
```
* { box-sizing: border-box; }
body {
	margin: 0;
	height: 100vh;
	display: flex;
	flex-direction: column;
	overflow: hidden;
	font: 11px "Liberation Sans", Arial, sans-serif;
	color: black;
	background-color: #d4d0c8;
}
button, select {
	font: inherit;
	color: inherit;
	padding: 0;
	border: 0;
	border-radius: 0;
	background: none;
}
button {
	display: flex;
	align-items: center;
	justify-content: center;
}
svg { width: 20px; height: 20px; flex: none; shape-rendering: crispEdges; }
button:disabled { color: #808080; text-shadow: 1px 1px 0 white; }
button:disabled svg { filter: drop-shadow(1px 1px 0 white); }
.defs { display: none; }
.down {
	border: 4px solid transparent;
	border-top-color: black;
	border-bottom: 0;
}

/* main toolbar */
.toolbar {
	display: flex;
	height: 37px;
	flex: none;
	padding-top: 1px;
	border-bottom: 1px solid #aaa79d;
}
.group {
	display: flex;
	align-items: center;
	padding: 0 3px;
	border: 1px solid #808080;
	border-left-color: white;
	box-shadow: inset 0 1px 0 white;
}
.grip {
	width: 3px;
	height: 28px;
	margin: 0 2px 0 1px;
	border-left: 1px solid white;
	border-right: 1px solid #808080;
}
.group button { width: 28px; height: 28px; }
.group .more { width: 13px; }
.more .down { border-width: 3px; border-bottom: 0; }
.group .pressed {
	border: 1px solid;
	border-color: #808080 white white #808080;
	background: repeating-conic-gradient(#fff 0 25%, #d4d0c8 0 50%) 0 0 / 2px 2px;
}

.main { display: flex; flex: 1; min-height: 0; }

/* model tree */
.sidebar {
	width: 337px;
	flex: none;
	display: flex;
	flex-direction: column;
	padding-left: 3px;
	border-right: 2px solid #606060;
}
.tabs {
	display: flex;
	gap: 1px;
	height: 29px;
	border-bottom: 1px solid white;
}
.tabs button {
	width: 30px;
	margin-top: 2px;
	border: 1px solid white;
	border-right: 2px solid #606060;
	border-bottom: 0;
}
.tabs .active { width: 33px; height: 29px; margin-top: 0; background-color: #d4d0c8; }
.menus { display: flex; height: 22px; }
.menus button {
	gap: 3px;
	justify-content: flex-end;
	padding-right: 5px;
}
.zeigen { width: 70px; }
.einst { width: 101px; }
.treebox {
	flex: 1;
	margin: 1px 2px 0 0;
	border: solid #606060;
	border-width: 2px 0 0 2px;
	background-color: white;
}
.treehead {
	height: 16px;
	background-color: #d4d0c8;
	border: 1px solid #505050;
	border-color: white #505050 #505050 white;
}
.tree { list-style: none; margin: 0; padding: 1px 0 0; }
.tree li { display: flex; align-items: center; height: 18px; white-space: pre; }
.tree svg { width: 18px; height: 18px; margin-right: 2px; }
.line, .branch {
	width: 20px;
	height: 18px;
	background: repeating-linear-gradient(#808080 0 1px, transparent 1px 2px) 9px 0 / 1px 18px no-repeat;
}
.branch {
	display: flex;
	align-items: center;
	padding-left: 5px;
	background: repeating-linear-gradient(#808080 0 1px, transparent 1px 2px) 9px 0 / 1px 18px no-repeat,
		repeating-linear-gradient(90deg, #808080 0 1px, transparent 1px 2px) 9px 9px / 11px 1px no-repeat;
}
.branch.end { background-size: 1px 10px, 11px 1px; }
.plus, .minus {
	width: 9px;
	height: 9px;
	border: 1px solid #808080;
	background: linear-gradient(black, black) 1px 3px / 5px 1px no-repeat, white;
}
.plus {
	background: linear-gradient(black, black) 1px 3px / 5px 1px no-repeat,
		linear-gradient(black, black) 3px 1px / 1px 5px no-repeat, white;
}

/* splitter between tree and model */
.splitter { display: flex; width: 16px; flex: none; }
.splitter svg { fill: none; stroke: #0000c0; shape-rendering: auto; }
.handles {
	display: flex;
	flex-direction: column;
	gap: 104px;
	width: 9px;
	padding: 328px 0 0 1px;
}
.splitter .handle {
	width: 6px;
	height: 106px;
	background: repeating-conic-gradient(#a8a8a4 0 25%, #e8e6e0 0 50%) 0 0 / 2px 2px;
}
.rails { display: flex; flex-direction: column; width: 7px; border-right: 1px solid #808080; }
.rail {
	height: 432px;
	width: 4px;
	border: solid #808080;
	border-width: 0 1px;
}
.rest { flex: 1; height: auto; }
.splitter .pull { width: 7px; height: 106px; }

.viewport {
	flex: 1;
	min-width: 0;
	position: relative;
	overflow: hidden;
	background: linear-gradient(#9f9c90, #bdbbae 50%, #dcd9cd);
}
.screw {
	display: block;
	width: 230px;
	height: 710px;
	margin: 123px 0 0 117px;
	shape-rendering: auto;
}

/* family table window */
.dialog {
	position: absolute;
	left: 377px;
	top: 106px;
	width: 681px;
	padding: 2px;
	background-color: #d4d0c8;
	border: 1px solid #d4d0c8;
	border-right: 2px solid #606060;
	border-bottom: 2px solid #606060;
	box-shadow: inset 1px 1px 0 white;
}
.titlebar {
	display: flex;
	align-items: center;
	height: 26px;
	margin-top: 1px;
	padding: 0 3px;
	background: linear-gradient(90deg, #0a246a, #a6caf0 90%);
}
.titlebar svg { width: 18px; height: 18px; }
.titlebar h1 {
	flex: 1;
	margin: 0 0 0 6px;
	font: bold 20px "Noto Sans", Verdana, sans-serif;
	line-height: 26px;
	color: white;
}
.menus button, .titlebar button, .arrow, .scroll button, .buttons button {
	background-color: #d4d0c8;
	border: 1px solid white;
	border-right-color: #404040;
	border-bottom-color: #404040;
	box-shadow: inset -1px -1px 0 #808080;
}
.titlebar button { width: 22px; height: 21px; }
.titlebar button svg { width: 16px; height: 16px; }
.titlebar .close { margin-left: 2px; }
.menubar {
	display: flex;
	gap: 11px;
	height: 33px;
	padding: 0 7px;
	border: 1px solid white;
	border-right-color: #808080;
	border-bottom-color: #808080;
	font: 300 16px "Open Sans", Tahoma, sans-serif;
}
.dlgtools { display: flex; height: 34px; }
.set {
	display: flex;
	align-items: center;
	padding: 0 2px;
	border: 1px solid white;
	border-right-color: #808080;
	border-bottom-color: #808080;
}
.set button { width: 28px; height: 28px; }
.search label { white-space: nowrap; }
.search button { margin-left: 4px; }
.combo {
	display: flex;
	width: 203px;
	height: 27px;
	border: 2px solid #606060;
	border-right-color: white;
	border-bottom-color: white;
	background-color: white;
}
.combo select {
	appearance: none;
	flex: 1;
	min-width: 0;
	height: 20px;
	padding: 0 2px;
	line-height: 16px;
	color: white;
	background: linear-gradient(#0a246a, #0a246a) 1px 2px / 151px 16px no-repeat;
}
.arrow {
	display: flex;
	align-items: center;
	justify-content: center;
	width: 20px;
	pointer-events: none;
}
.content {
	display: grid;
	grid-template-columns: 1fr 21px;
	grid-template-rows: 242px 21px;
	margin: 6px 5px 0;
	border: 2px solid #606060;
	border-right-color: white;
	border-bottom-color: white;
}
.message { padding: 1px 2px; font-size: 12px; font-weight: bold; }
.message p { display: flex; align-items: center; height: 20px; margin: 0; white-space: nowrap; }
.message svg { margin-right: 4px; }
.scroll {
	display: flex;
	justify-content: space-between;
	background: repeating-conic-gradient(#f4f2ee 0 25%, #d4d0c8 0 50%) 0 0 / 2px 2px;
}
.scroll.vert { flex-direction: column; }
.scroll button { width: 21px; height: 21px; }
.scroll svg { width: 9px; height: 9px; fill: #808080; filter: drop-shadow(1px 1px 0 white); }
.buttons {
	display: grid;
	grid-template-columns: repeat(3, 1fr);
	justify-items: center;
	padding: 10px 0 5px;
}
.buttons button { width: 73px; height: 29px; gap: 4px; }
```
